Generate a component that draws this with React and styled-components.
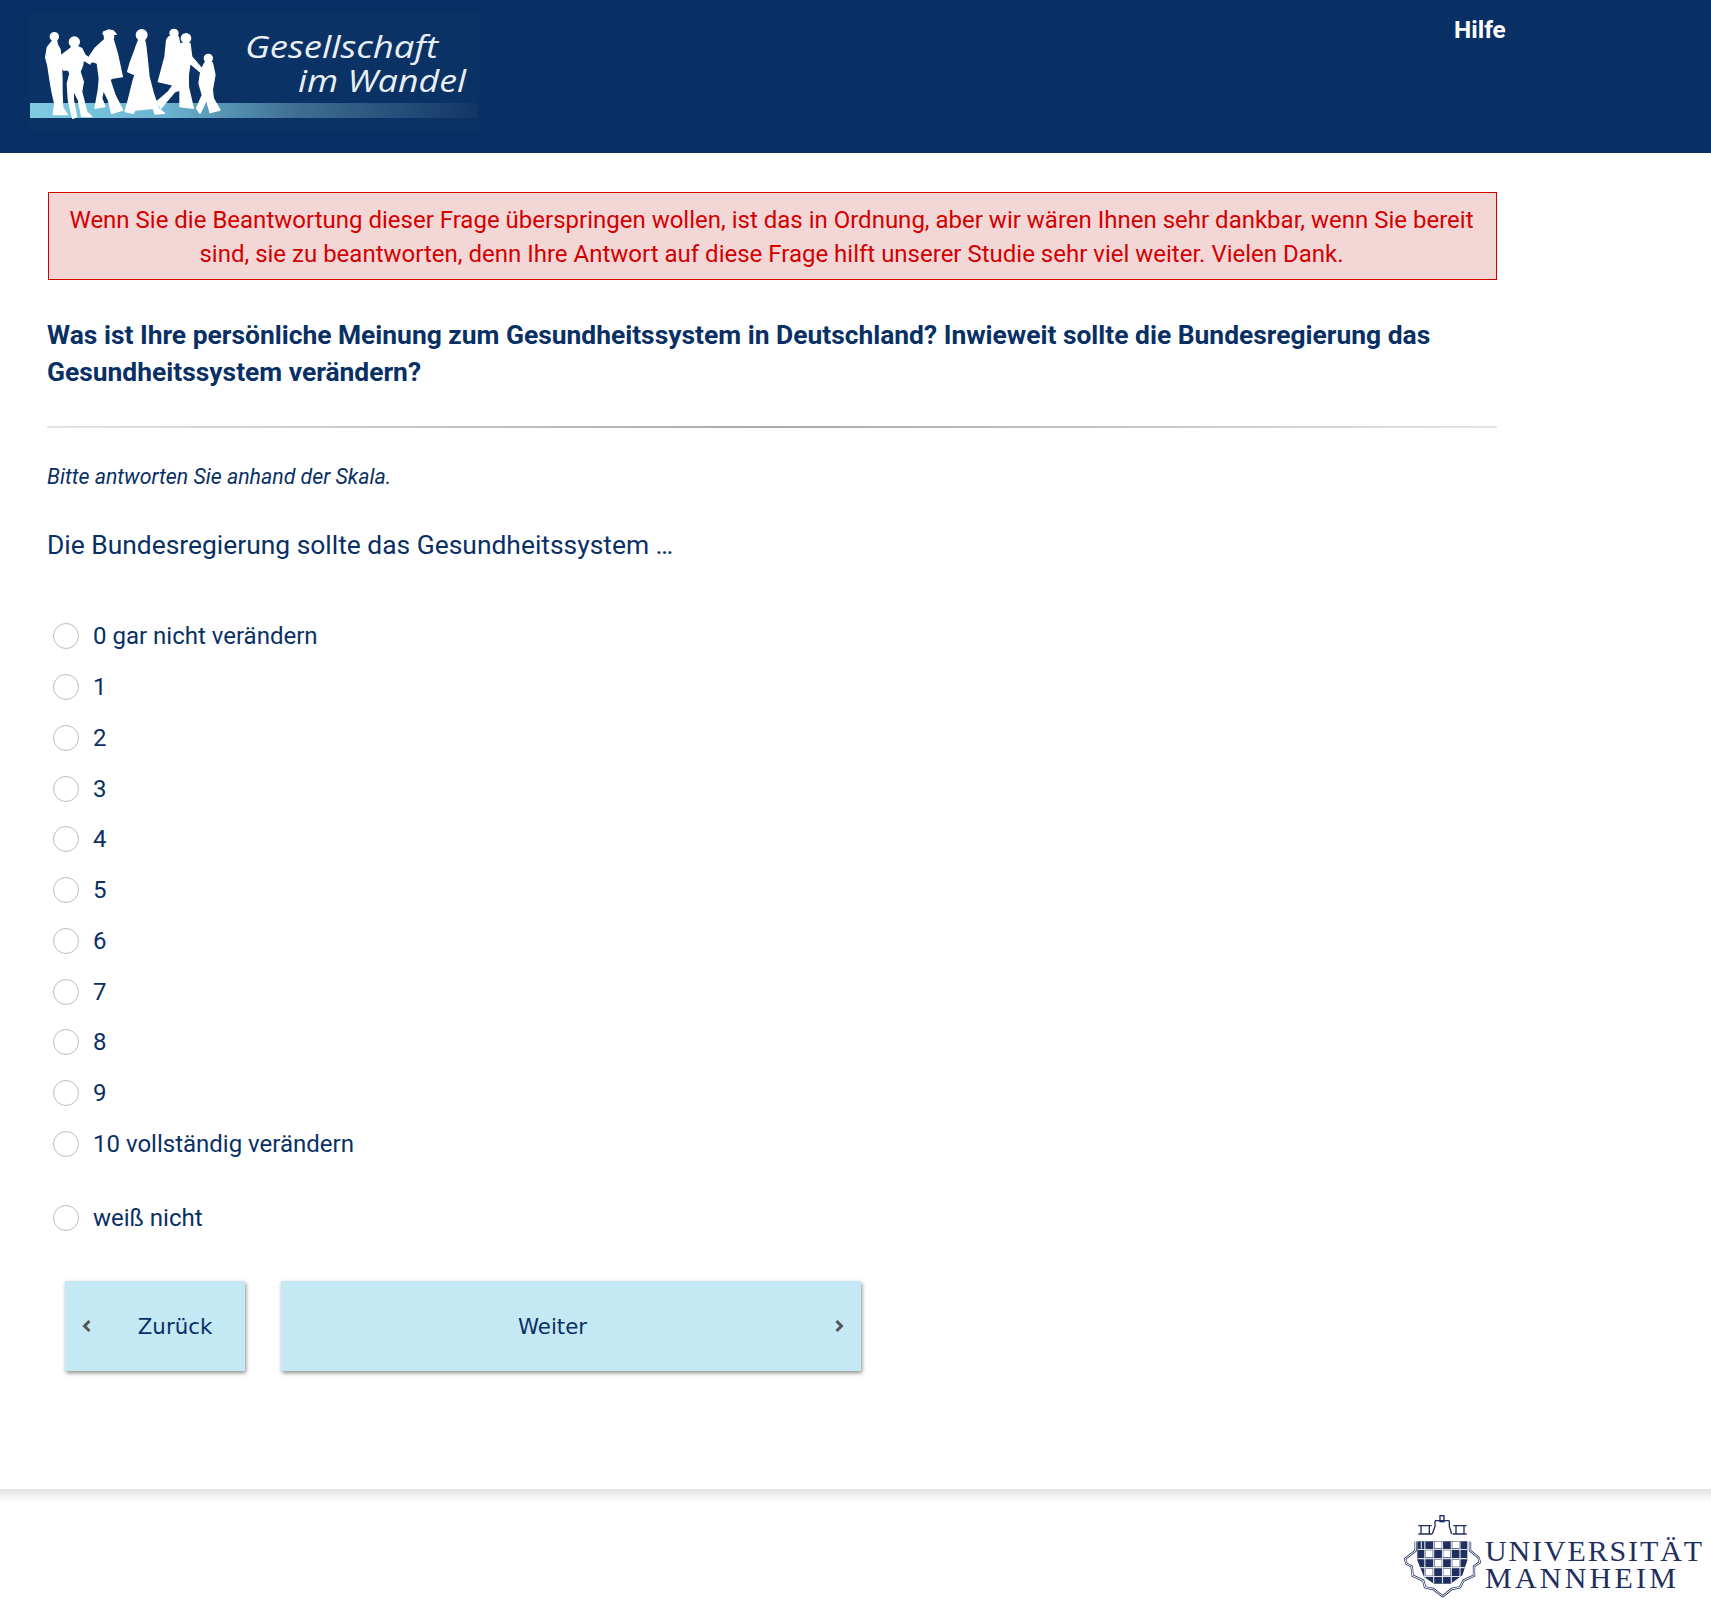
import React from "react";
import styled, { createGlobalStyle } from "styled-components";

const NAVY = "#093064";
const UNI = "#1f2f5f";

const Global = createGlobalStyle`
  html, body { margin: 0; padding: 0; background: #fff; }
  body { font-family: Roboto, "Liberation Sans", sans-serif; color: ${NAVY}; }
  * { box-sizing: border-box; }
`;

const Page = styled.div`
  width: 1711px;
  height: 1606px;
  display: flex;
  flex-direction: column;
  overflow: hidden;
`;

const Header = styled.header`
  height: 153px;
  flex: none;
  background: ${NAVY};
  display: flex;
  align-items: flex-start;
  padding: 13px 0 0 25px;
`;

const LogoSvg = styled.svg`
  width: 455px;
  height: 124px;
  flex: none;
  display: block;
`;

const HelpLink = styled.a`
  margin-left: 974px;
  margin-top: 2px;
  color: #fff;
  font: 700 24.4px/30px Roboto, sans-serif;
`;

const Main = styled.main`
  flex: 1;
  padding: 39px 0 0 47px;
  width: 1497px;
`;

const Alert = styled.div`
  height: 88px;
  margin-left: 1px;
  border: 1px solid #d40000;
  background: #f3d6d6;
  color: #d40000;
  font-size: 24px;
  line-height: 34px;
  text-align: center;
  padding: 10px 19px 0 17px;
`;

const Question = styled.h1`
  margin: 37px 0 0;
  font-size: 26.4px;
  line-height: 37px;
  font-weight: 700;
  color: ${NAVY};
`;

const Divider = styled.hr`
  margin: 35px 0 0;
  border: 0;
  height: 2px;
  background: linear-gradient(to right, #e4e4e4, #a9a9a9 50%, #e4e4e4);
`;

const Hint = styled.p`
  margin: 35px 0 0;
  font-size: 21.33px;
  line-height: 28px;
  font-style: italic;
`;

const Stem = styled.p`
  margin: 36px 0 0;
  font-size: 26.4px;
  line-height: 36px;
`;

const Options = styled.div`
  margin-top: 48px;
  display: flex;
  flex-direction: column;
`;

const Option = styled.label`
  height: 50.75px;
  display: flex;
  align-items: center;
  font-size: 24px;
  margin-top: ${(p) => (p.$separate ? "23px" : "0")};
`;

const Radio = styled.span`
  width: 26px;
  height: 26px;
  margin: 0 14px 0 6px;
  flex: none;
  border: 1px solid #bdbdbd;
  border-radius: 50%;
  background: #fff;
`;

const Nav = styled.nav`
  margin: 38px 0 0 18px;
  display: flex;
  gap: 36px;
`;

const NavButton = styled.button`
  width: ${(p) => p.$width}px;
  height: 90px;
  border: 0;
  background: #c5e8f5;
  box-shadow: 1px 2px 4px rgba(0, 0, 0, 0.45);
  color: ${NAVY};
  font: 400 21.33px "DejaVu Sans", Verdana, sans-serif;
  display: flex;
  align-items: center;
  padding: 0 16px;
`;

const NavLabel = styled.span`
  flex: 1;
  text-align: center;
  padding: ${(p) => p.$pad};
`;

const Footer = styled.footer`
  height: 117px;
  flex: none;
  background: linear-gradient(#e3e3e3, #f0f0f0 6px, #fbfbfb 11px, #fff 15px);
  display: flex;
  justify-content: flex-end;
  padding: 23px 6px 0 0;
`;

const UniSvg = styled.svg`
  width: 302px;
  height: 90px;
  display: block;
`;

const Chevron = ({ dir }) => (
  <svg width="12" height="14" viewBox="0 0 12 14" fill="none" stroke="#555" strokeWidth="3">
    <path d={dir === "left" ? "M8.5 2 L3.5 7 L8.5 12" : "M3.5 2 L8.5 7 L3.5 12"} />
  </svg>
);

const Logo = () => (
  <LogoSvg viewBox="25 13 455 124">
    <defs>
      <linearGradient id="bar" x1="0" x2="1" y1="0" y2="0">
        <stop offset="0" stopColor="#7fcbe3" />
        <stop offset="0.3" stopColor="#6bb4d0" />
        <stop offset="0.6" stopColor="#3e6d92" />
        <stop offset="1" stopColor="#123767" />
      </linearGradient>
      <filter id="soft" x="-5%" y="-5%" width="110%" height="110%">
        <feGaussianBlur stdDeviation="0.45" />
      </filter>
    </defs>
    <rect x="29" y="13" width="450" height="120" fill="#0b3265" />
    <rect x="30" y="103" width="447" height="15" fill="url(#bar)" />
    <g fill="#fff" stroke="#fff" strokeWidth="4" strokeLinejoin="round" filter="url(#soft)">
      <g transform="translate(40 20) scale(0.3333)">
        <circle cx="43" cy="50" r="12" />
        <path d="M38 62 L50 62 L52 74 L60 88 L64 125 L66 180 L66 215 L68 262 L82 284 L40 284 L44 250 L36 215 L30 180 L24 140 L17 112 L22 82 Z" />
        <circle cx="103" cy="66" r="15" />
        <path d="M95 80 L112 80 L125 85 L135 105 L155 120 L150 132 L130 120 L128 135 L120 155 L130 185 L125 215 L140 275 L155 290 L125 290 L115 240 L100 210 L100 240 L110 290 L98 295 L85 240 L82 190 L90 160 L85 150 L70 150 L62 125 L65 105 L92 85 Z" />
        <circle cx="207" cy="50" r="14" />
        <path d="M190 36 L205 30 L220 33 L229 43 L190 44 Z" />
        <path d="M192 60 L220 60 L232 100 L247 170 L215 175 L210 180 L225 225 L248 270 L215 280 L205 240 L190 210 L185 235 L195 260 L165 265 L175 210 L178 175 L172 130 L160 125 L148 128 L140 122 L165 85 Z" />
      </g>
      <g transform="translate(125 20) scale(0.3333)">
        <circle cx="50" cy="45" r="16" />
        <path d="M42 58 L58 58 L62 75 L68 130 L72 170 L85 220 L100 265 L118 280 L90 282 L85 265 L30 270 L25 280 L0 275 L10 240 L25 180 L30 165 L8 155 L15 130 L30 90 L35 75 Z" />
        <circle cx="147" cy="40" r="12" />
        <circle cx="183" cy="55" r="14" />
        <path d="M132 50 L160 50 L165 75 L170 70 L195 70 L200 110 L230 145 L225 155 L195 130 L190 165 L190 200 L205 265 L165 260 L165 210 L150 215 L120 250 L108 265 L95 245 L130 215 L145 195 L100 185 L120 110 L125 60 Z" />
        <circle cx="250" cy="115" r="12" />
        <path d="M240 128 L262 128 L270 165 L262 210 L265 235 L285 270 L255 278 L245 240 L225 280 L215 265 L232 225 L222 190 L228 150 Z" />
      </g>
    </g>
    <g fill="#e9eff5" fontFamily="'Open Sans', 'DejaVu Sans', sans-serif" fontStyle="italic" fontSize="31">
      <text x="245" y="58" textLength="193" lengthAdjust="spacingAndGlyphs">Gesellschaft</text>
      <text x="298" y="92" textLength="168" lengthAdjust="spacingAndGlyphs">im Wandel</text>
    </g>
  </LogoSvg>
);

const ROWS = [97, 124, 152, 179];
const whites = ROWS.flatMap((y, r) => (r % 2 === 0 ? [104, 157] : [77, 130]).map((x) => [x, y]));
const SHIELD = "M52 97 H202 V154 L187 199 L152 224 H102 L72 204 L52 154 Z";
const CONTOUR =
  "M47 98 L47 125 L15 150 L20 165 L35 172 L38 200 L70 215 L75 235 L100 240 L128 262 L155 240 L180 235 L190 215 L222 200 L222 172 L240 160 L235 145 L210 125 L210 98";

const UniLogo = () => (
  <UniSvg viewBox="1403 1513 302 90">
    <defs>
      <clipPath id="shield">
        <path d={SHIELD} />
      </clipPath>
    </defs>
    <g transform="translate(1400 1510) scale(0.3333)">
      <g fill="none" stroke={UNI} strokeWidth="4">
        <rect x="120" y="20" width="12" height="18" />
        <path d="M105 35 H148 M105 35 V52 L97 75 M148 35 V52 L155 75" />
        <path d="M55 50 H95 M63 50 V75 M88 50 V75 M55 75 H96" />
        <path d="M160 50 H200 M168 50 V75 M192 50 V75 M158 75 H200" />
      </g>
      <path d={CONTOUR} fill="none" stroke={UNI} strokeWidth="7" strokeLinejoin="round" />
      <path d={CONTOUR} fill="none" stroke="#fff" strokeWidth="3" strokeLinejoin="round" />
      <path d={SHIELD} fill={UNI} />
      <g clipPath="url(#shield)">
        <path
          d="M64 97 V119 M74.5 97 V224 M101 97 V224 M127.5 97 V224 M154 97 V224 M180 97 V224 M52 121.5 H202 M52 149 H202 M52 176 H202 M52 202.5 H202"
          fill="none"
          stroke="#fff"
          strokeWidth="3.5"
          strokeOpacity="0.85"
        />
        <g fill="#fff">
          {whites.map(([x, y]) => (
            <rect key={`${x}-${y}`} x={x} y={y} width="21" height="21" />
          ))}
        </g>
      </g>
    </g>
    <g fill={UNI} fontFamily="'Liberation Serif', 'Times New Roman', serif" fontSize="30">
      <text x="1485" y="1562" textLength="217">UNIVERSITÄT</text>
      <text x="1485" y="1589" textLength="191">MANNHEIM</text>
    </g>
  </UniSvg>
);

const LABELS = ["0 gar nicht verändern", "1", "2", "3", "4", "5", "6", "7", "8", "9", "10 vollständig verändern"];

export default function App() {
  return (
    <Page>
      <Global />
      <Header>
        <Logo />
        <HelpLink>Hilfe</HelpLink>
      </Header>
      <Main>
        <Alert>
          Wenn Sie die Beantwortung dieser Frage überspringen wollen, ist das in Ordnung, aber wir wären Ihnen sehr dankbar, wenn Sie bereit sind, sie zu beantworten, denn Ihre Antwort auf diese Frage hilft unserer Studie sehr viel weiter. Vielen Dank.
        </Alert>
        <Question>
          Was ist Ihre persönliche Meinung zum Gesundheitssystem in Deutschland? Inwieweit sollte die Bundesregierung das Gesundheitssystem verändern?
        </Question>
        <Divider />
        <Hint>Bitte antworten Sie anhand der Skala.</Hint>
        <Stem>Die Bundesregierung sollte das Gesundheitssystem …</Stem>
        <Options>
          {LABELS.map((l) => (
            <Option key={l}>
              <Radio />
              {l}
            </Option>
          ))}
          <Option $separate>
            <Radio />
            weiß nicht
          </Option>
        </Options>
        <Nav>
          <NavButton $width={180}>
            <Chevron dir="left" />
            <NavLabel $pad="0 0 0 28px">Zurück</NavLabel>
          </NavButton>
          <NavButton $width={580}>
            <NavLabel $pad="0 25px 0 0">Weiter</NavLabel>
            <Chevron dir="right" />
          </NavButton>
        </Nav>
      </Main>
      <Footer>
        <UniLogo />
      </Footer>
    </Page>
  );
}
